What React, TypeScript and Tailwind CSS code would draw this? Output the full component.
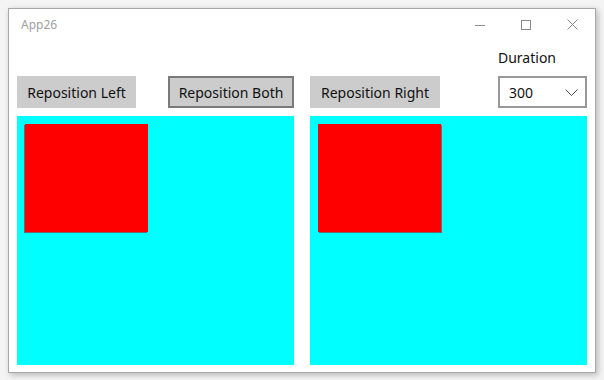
const font = { fontFamily: '"Noto Sans", "Open Sans", sans-serif' };

const CaptionButtons = () => (
  <div className="flex h-full">
    <div className="flex w-[46px] items-center justify-center">
      <svg width="10" height="10" viewBox="0 0 10 10">
        <path d="M0 5.5H10" stroke="#8a8a8a" strokeWidth="1" />
      </svg>
    </div>
    <div className="flex w-[46px] items-center justify-center">
      <svg width="10" height="10" viewBox="0 0 10 10">
        <rect x="0.5" y="0.5" width="9" height="9" fill="none" stroke="#8a8a8a" strokeWidth="1" />
      </svg>
    </div>
    <div className="flex w-[46px] items-center justify-center">
      <svg width="11" height="11" viewBox="0 0 11 11">
        <path d="M0.5 0.5L10.5 10.5M10.5 0.5L0.5 10.5" stroke="#8a8a8a" strokeWidth="1" />
      </svg>
    </div>
  </div>
);

const Button = ({ label, width, active }: { label: string; width: string; active?: boolean }) => (
  <button
    className={
      active
        ? `${width} h-8 border-2 border-[#7a7a7a] bg-[#cccccc] text-[14px] text-[#111]`
        : `${width} h-8 bg-[#cccccc] text-[14px] text-[#111]`
    }
  >
    {label}
  </button>
);

export default function App() {
  return (
    <div className="h-[380px] w-[604px] bg-[#f4f4f4] p-2" style={font}>
      <div className="flex h-[365px] w-[588px] flex-col border border-[#a8a8a8] bg-white shadow-[2px_2px_6px_rgba(0,0,0,0.25)]">
        <div className="flex h-[31px] items-center justify-between">
          <span className="pl-3 text-[12px] text-[#a0a0a0]">App26</span>
          <CaptionButtons />
        </div>
        <div className="flex flex-1 flex-col px-2 pt-2 pb-[7px]">
          <div className="grid grid-cols-2 items-end gap-4">
            <div className="flex items-end justify-between">
              <Button label="Reposition Left" width="w-[119px]" />
              <Button label="Reposition Both" width="w-[126px]" active />
            </div>
            <div className="flex items-end justify-between">
              <Button label="Reposition Right" width="w-[130px]" />
              <div className="flex flex-col">
                <span className="mb-2 text-[14px] leading-5 text-[#111]">Duration</span>
                <div className="flex h-8 w-[89px] items-center justify-between border-2 border-[#999999] pl-[9px] pr-[7px]">
                  <span className="text-[14px] text-[#111]">300</span>
                  <svg width="13" height="7" viewBox="0 0 13 7">
                    <path d="M0.5 0.5L6.5 6.5L12.5 0.5" fill="none" stroke="#555" strokeWidth="1" />
                  </svg>
                </div>
              </div>
            </div>
          </div>
          <div className="mt-2 grid flex-1 grid-cols-2 gap-4">
            <div className="bg-[#00ffff] p-2">
              <div className="h-[108px] w-[123px] bg-[#ff0000] shadow-[-1px_1px_0_#6b6b6b]" />
            </div>
            <div className="bg-[#00ffff] p-2">
              <div className="h-[108px] w-[123px] bg-[#ff0000] shadow-[1px_1px_0_#6b6b6b]" />
            </div>
          </div>
        </div>
      </div>
    </div>
  );
}
